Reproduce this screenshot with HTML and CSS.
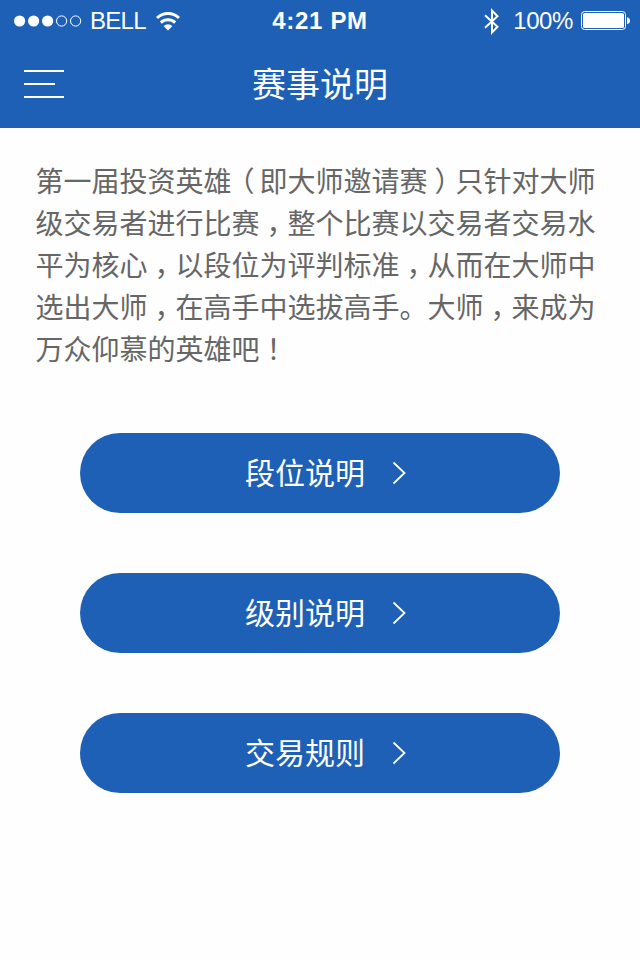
FILE: index.html
```html
<!DOCTYPE html>
<html lang="zh-CN">
<head>
<meta charset="utf-8">
<title>赛事说明</title>
<link rel="stylesheet" href="styles.css">
</head>
<body>
<header class="header">
  <div class="status">
    <div class="carrier">
      <svg class="signal" width="68" height="12" viewBox="0 0 68 12" fill="#fff"><circle cx="5.6" cy="6" r="5.6"/><circle cx="19.6" cy="6" r="5.6"/><circle cx="33.6" cy="6" r="5.6"/><g fill="none" stroke="#fff"><circle cx="47.6" cy="6" r="5.1"/><circle cx="61.6" cy="6" r="5.1"/></g></svg>
      <span class="carrier-name">BELL</span>
      <svg class="wifi" width="24" height="19" viewBox="0 0 24 19"><g fill="none" stroke="#fff" stroke-width="3"><path d="M1 6a16 16 0 0 1 22 0"/><path d="M4.8 10.6a10.5 10.5 0 0 1 14.4 0"/></g><path d="M7.6 14a6.4 6.4 0 0 1 8.8 0L12 18.6z" fill="#fff"/></svg>
    </div>
    <time class="clock">4:21 PM</time>
    <div class="power">
      <svg class="bluetooth" width="15" height="27" viewBox="0 0 15 27" fill="none" stroke="#fff" stroke-width="2"><path d="M1 7.2l12.5 11.5L8 24.5v-22l5.5 5.8L1 19.8"/></svg>
      <span class="percent">100%</span>
      <svg class="battery" width="50" height="20" viewBox="0 0 50 20"><rect x=".5" y=".5" width="44" height="18" rx="3" fill="none" stroke="#fff"/><rect x="2" y="2" width="41" height="15" rx="1.5" fill="#fff"/><path d="M46 6.3q3 .8 3 3.5t-3 3.5z" fill="#fff"/></svg>
    </div>
  </div>
  <nav class="navbar">
    <svg class="menu" width="40" height="28" viewBox="0 0 40 28" fill="#fff"><path d="M0 0h40v2H0zM0 13h31v2H0zM0 26h40v2H0z"/></svg>
    <h1 class="title">赛事说明</h1>
  </nav>
</header>
<main class="content">
  <p class="intro">第一届投资英雄<span class="mark open">（</span>即大师邀请赛<span class="mark">）</span>只针对大师<br>级交易者进行比赛<span class="mark">，</span>整个比赛以交易者交易水<br>平为核心<span class="mark">，</span>以段位为评判标准<span class="mark">，</span>从而在大师中<br>选出大师<span class="mark">，</span>在高手中选拔高手。大师<span class="mark">，</span>来成为<br>万众仰慕的英雄吧<span class="mark">！</span></p>
  <div class="links">
    <a class="button"><span>段位说明</span><svg width="15" height="24" viewBox="0 0 15 24" fill="none" stroke="#fff" stroke-width="1.8"><path d="M1.5 1.5L12.5 12l-11 10.5"/></svg></a>
    <a class="button"><span>级别说明</span><svg width="15" height="24" viewBox="0 0 15 24" fill="none" stroke="#fff" stroke-width="1.8"><path d="M1.5 1.5L12.5 12l-11 10.5"/></svg></a>
    <a class="button"><span>交易规则</span><svg width="15" height="24" viewBox="0 0 15 24" fill="none" stroke="#fff" stroke-width="1.8"><path d="M1.5 1.5L12.5 12l-11 10.5"/></svg></a>
  </div>
</main>
</body>
</html>
```
FILE: styles.css
```css
* { box-sizing: border-box; }
body {
  margin: 0;
  min-height: 960px;
  background: #fefefe;
  font-family: "Noto Sans CJK SC", sans-serif;
}
svg { display: block; flex: none; }
.header {
  height: 128px;
  background: #1e60b6;
  color: #fff;
}
.status {
  display: grid;
  grid-template-columns: 1fr auto 1fr;
  align-items: center;
  height: 42px;
  padding: 0 9px 0 14px;
  font-family: "Liberation Sans", Arial, sans-serif;
  font-size: 24px;
  line-height: 42px;
}
.carrier, .power { display: flex; align-items: center; }
.carrier-name { margin-left: 8px; width: 58px; letter-spacing: -0.7px; }
.wifi { margin-left: 8px; }
.clock { font-weight: bold; letter-spacing: 0.7px; margin-right: 5px; }
.power { justify-content: flex-end; }
.percent { margin: 0 8px 0 14px; letter-spacing: -0.4px; }
.navbar {
  display: grid;
  grid-template-columns: 40px 1fr 40px;
  align-items: center;
  height: 84px;
  padding: 0 24px;
}
.title {
  margin: 0;
  padding-bottom: 3px;
  font-size: 34px;
  font-weight: 400;
  line-height: 48px;
  text-align: center;
}
.content { padding: 31px 36px 0 35.5px; }
.intro {
  margin: 0;
  color: #666;
  font-size: 28px;
  line-height: 42px;
  white-space: nowrap;
}
/* Half-width punctuation centred in a full-width cell */
.mark {
  font-feature-settings: "halt";
  padding: 0 7px;
}
.open { padding: 0 5px 0 9px; }
.links {
  display: grid;
  gap: 60px;
  padding: 64px 44px 0 44.5px;
}
.button {
  display: flex;
  align-items: center;
  height: 80px;
  padding-left: 165px;
  gap: 27px;
  border-radius: 40px;
  background: #1e60b6;
  color: #fff;
  font-size: 30px;
  line-height: 44px;
}
.button span { padding-bottom: 4px; }
```
